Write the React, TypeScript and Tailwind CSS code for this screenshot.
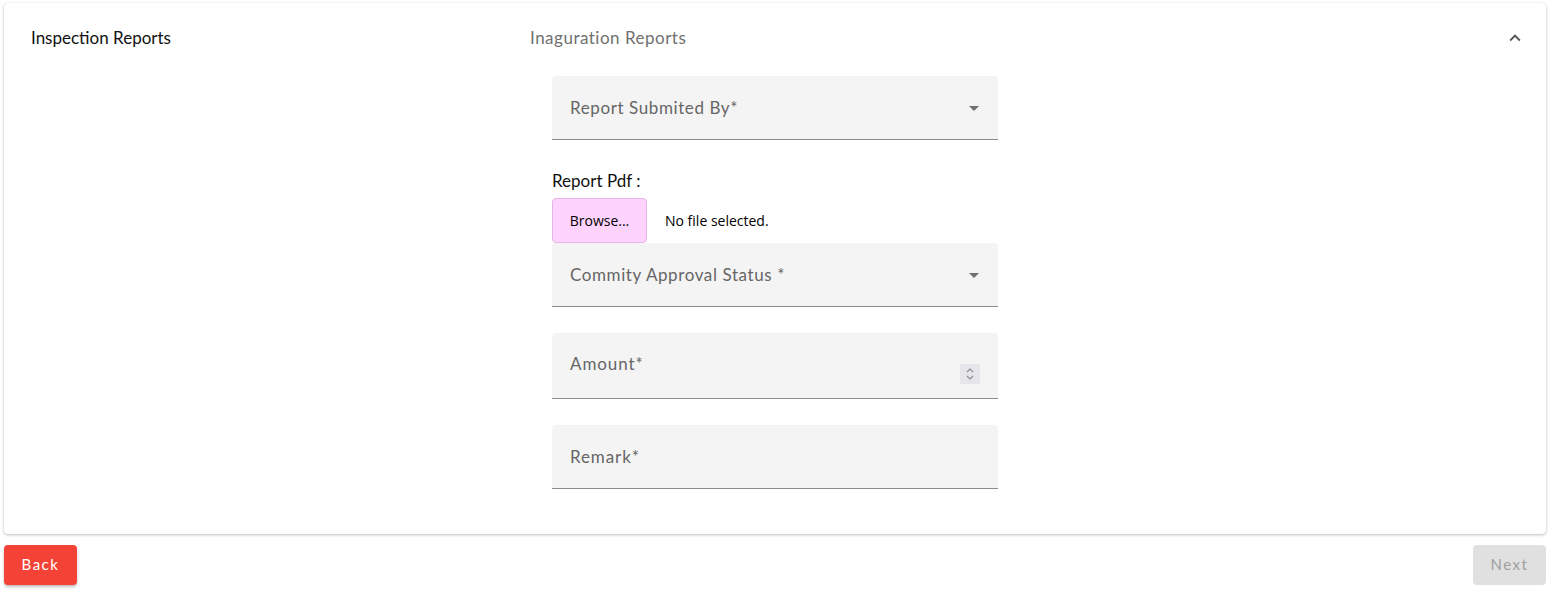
export default function App() {
  const font = { fontFamily: "Lato, 'Open Sans', sans-serif" };

  const Arrow = () => (
    <svg width="24" height="24" viewBox="0 0 24 24" className="absolute right-[12px] top-[20px] fill-[#6f6f6f]">
      <path d="M7 10l5 5 5-5z" />
    </svg>
  );

  return (
    <div className="min-h-screen bg-white text-black" style={font}>
      <div className="ml-1 mt-[3px] w-[1542px] rounded-[4px] bg-white shadow-[0_1px_3px_rgba(0,0,0,0.25),0_0_1px_rgba(0,0,0,0.1)]">
        <div className="flex h-[70px] items-center pl-[27px] pr-[20px]">
          <div className="w-[499px] text-[17px] text-[#111]">Inspection Reports</div>
          <div className="flex-1 text-[17px] tracking-[0.5px] text-[#707070]">Inaguration Reports</div>
          <svg width="22" height="22" viewBox="0 0 24 24" className="fill-[#555]">
            <path d="M12 8l-6 6 1.41 1.41L12 10.83l4.59 4.58L18 14z" />
          </svg>
        </div>

        <div className="mx-auto w-[446px] pb-[45px] pt-[3px]">
          <div className="relative h-[64px] rounded-t-[4px] border-b border-[#8c8c8c] bg-[#f4f4f4]">
            <span className="absolute left-[18px] top-[19px] text-[17px] tracking-[0.6px] text-[#666]">Report Submited By*</span>
            <Arrow />
          </div>

          <div className="mt-[28px] text-[17px] text-[#111]">Report Pdf :</div>
          <div className="mt-[4px] flex items-center">
            <button className="h-[45px] w-[95px] rounded-[4px] border border-[#e6b4e6] bg-[#fed4fe] text-[14px] text-black" style={{ fontFamily: "'Open Sans', sans-serif" }}>
              Browse...
            </button>
            <span className="ml-[18px] text-[14px] text-black" style={{ fontFamily: "'Open Sans', sans-serif" }}>No file selected.</span>
          </div>

          <div className="relative h-[64px] rounded-t-[4px] border-b border-[#8c8c8c] bg-[#f4f4f4]">
            <span className="absolute left-[18px] top-[19px] text-[17px] tracking-[0.6px] text-[#666]">Commity Approval Status *</span>
            <Arrow />
          </div>

          <div className="relative mt-[26px] h-[66px] rounded-t-[4px] border-b border-[#8c8c8c] bg-[#f4f4f4]">
            <span className="absolute left-[18px] top-[18px] text-[17px] tracking-[0.9px] text-[#666]">Amount*</span>
            <div className="absolute right-[18px] top-[31px] flex h-[20px] w-[20px] items-center justify-center bg-[#e6e6ea]">
              <svg width="10" height="14" viewBox="0 0 10 14" className="fill-none stroke-[#8a8a94]" strokeWidth="1.2">
                <path d="M2 5l3-3 3 3M2 9l3 3 3-3" />
              </svg>
            </div>
          </div>

          <div className="relative mt-[26px] h-[64px] rounded-t-[4px] border-b border-[#8c8c8c] bg-[#f4f4f4]">
            <span className="absolute left-[18px] top-[19px] text-[17px] tracking-[0.9px] text-[#666]">Remark*</span>
          </div>
        </div>
      </div>

      <div className="mt-[11px] flex w-[1546px] justify-between pl-1">
        <button className="h-[40px] w-[73px] rounded-[4px] bg-[#f44336] text-[15px] tracking-[1.5px] text-white shadow-[0_2px_3px_rgba(0,0,0,0.25)]">
          Back
        </button>
        <button className="h-[40px] w-[73px] rounded-[4px] bg-[#e0e0e0] text-[15px] tracking-[1.5px] text-[#a0a0a0]">
          Next
        </button>
      </div>
    </div>
  );
}
